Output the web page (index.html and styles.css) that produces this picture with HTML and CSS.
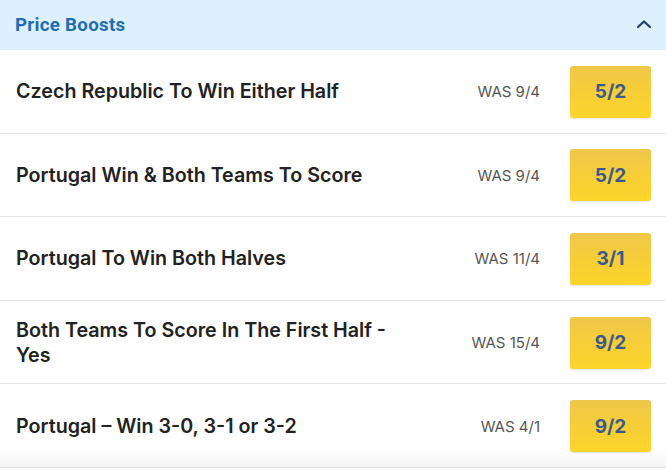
FILE: index.html
```html
<!DOCTYPE html>
<html lang="en">
<head>
<meta charset="utf-8">
<link rel="stylesheet" href="styles.css">
</head>
<body>
<section class="panel">
  <header class="panel-head">
    <h2 class="panel-title">Price Boosts</h2>
    <svg class="chevron" width="16" height="10" viewBox="0 0 16 10"><path d="M2 8 L8 2.5 L14 8" fill="none" stroke="#1e3f6b" stroke-width="2.2" stroke-linecap="round" stroke-linejoin="round"/></svg>
  </header>
  <div class="rows">
    <div class="row"><div class="name">Czech Republic To Win Either Half</div><div class="was">WAS 9/4</div><button class="odds">5/2</button></div>
    <div class="row"><div class="name">Portugal Win &amp; Both Teams To Score</div><div class="was">WAS 9/4</div><button class="odds">5/2</button></div>
    <div class="row"><div class="name">Portugal To Win Both Halves</div><div class="was">WAS 11/4</div><button class="odds">3/1</button></div>
    <div class="row"><div class="name">Both Teams To Score In The First Half - Yes</div><div class="was">WAS 15/4</div><button class="odds">9/2</button></div>
    <div class="row"><div class="name">Portugal – Win 3-0, 3-1 or 3-2</div><div class="was">WAS 4/1</div><button class="odds">9/2</button></div>
    <div class="fade"></div>
  </div>
</section>
</body>
</html>
```

FILE: styles.css
```css
* { box-sizing: border-box; }
html, body { margin: 0; padding: 0; background: #fff; }
body { font-family: Inter, "Noto Sans", sans-serif; }
.panel { width: 666px; }
.panel-head {
  height: 50px;
  background: #ddf0fd;
  display: flex;
  align-items: center;
  justify-content: space-between;
  padding: 0 14px 0 15px;
}
.panel-title {
  margin: 0;
  font-family: Roboto, sans-serif;
  font-weight: 700;
  font-size: 18.7px;
  color: #1f6db5;
  letter-spacing: 0.3px;
}
.chevron { display: block; margin-top: -2px; }
.rows { position: relative; }
.row {
  height: 83.6px;
  display: flex;
  align-items: center;
  padding: 1px 15px 0 16px;
  border-bottom: 1px solid #e4e4e4;
}
.name {
  width: 385px;
  font-weight: 600;
  font-size: 19.7px;
  line-height: 25px;
  color: #222;
}
.was {
  margin-left: auto;
  font-size: 15px;
  color: #555;
  margin-right: 30px;
  white-space: nowrap;
}
.odds {
  width: 81px;
  height: 52px;
  border: none;
  border-radius: 3px;
  background: linear-gradient(180deg, #efc74b 0%, #f8cf33 60%, #fcd52b 100%);
  box-shadow: 0 1px 2px rgba(0,0,0,0.12);
  font-family: Inter, sans-serif;
  font-weight: 700;
  font-size: 19px;
  color: #3a5a8e;
  padding: 0;
}
.fade {
  position: absolute;
  left: 0; right: 0;
  bottom: 1px;
  height: 18px;
  background: linear-gradient(180deg, rgba(0,0,0,0) 0%, rgba(0,0,0,0.045) 100%);
  pointer-events: none;
}
```
